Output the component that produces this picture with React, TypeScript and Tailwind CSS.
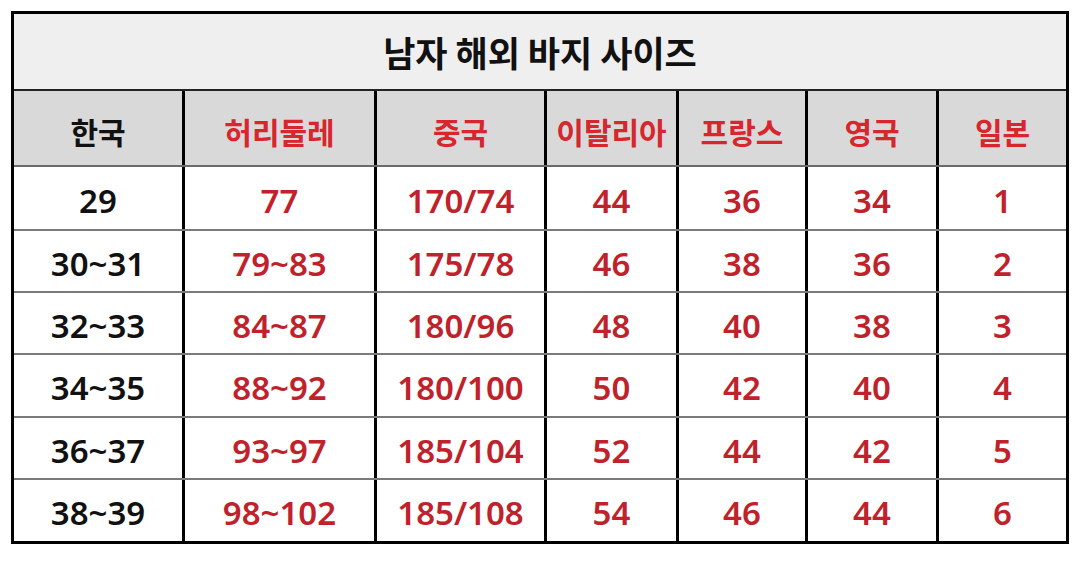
const widths = ["w-[168px]", "w-[192px]", "w-[170px]", "w-[132px]", "w-[129px]", "w-[131px]", "w-[130px]"];

const headers = ["한국", "허리둘레", "중국", "이탈리아", "프랑스", "영국", "일본"];

const rowHeights = ["h-[64px]", "h-[62px]", "h-[62px]", "h-[63px]", "h-[62px]", "h-[61px]"];

const rows = [
	["29", "77", "170/74", "44", "36", "34", "1"],
	["30~31", "79~83", "175/78", "46", "38", "36", "2"],
	["32~33", "84~87", "180/96", "48", "40", "38", "3"],
	["34~35", "88~92", "180/100", "50", "42", "40", "4"],
	["36~37", "93~97", "185/104", "52", "44", "42", "5"],
	["38~39", "98~102", "185/108", "54", "46", "44", "6"],
];

const font = { fontFamily: '"Noto Sans CJK KR", "Noto Sans", sans-serif' };

export default function App() {
	return (
		<div className="w-[1080px] h-[561px] bg-white pt-[11px] pl-[11px]" style={font}>
			<div className="w-[1058px] border-[3px] border-black flex flex-col">
				<div className="h-[77px] bg-[#efefef] border-b-2 border-[#222] flex items-center justify-center">
					<span className="text-[35px] font-bold text-[#111] leading-none">남자 해외 바지 사이즈</span>
				</div>
				<div className="flex h-[76px] bg-[#d9d9d9] border-b-2 border-[#6b6b6b]">
					{headers.map((h, i) => (
						<div
							key={h}
							className={`${widths[i]} flex items-center justify-center pt-[6px] ${i > 0 ? "border-l-[3px] border-black" : ""}`}
						>
							<span className={`text-[30px] font-bold leading-none ${i === 0 ? "text-[#111]" : "text-[#d8262e]"}`}>
								{h}
							</span>
						</div>
					))}
				</div>
				{rows.map((r, ri) => (
					<div
						key={ri}
						className={`flex ${rowHeights[ri]} ${ri < rows.length - 1 ? "border-b-2 border-[#7a7a7a]" : ""}`}
					>
						{r.map((c, i) => (
							<div
								key={i}
								className={`${widths[i]} flex items-center justify-center pt-[4px] ${i > 0 ? "border-l-[3px] border-black" : ""}`}
							>
								<span
									className={`text-[33px] font-semibold leading-none ${i === 0 ? "text-[#111]" : "text-[#c0222b]"}`}
									style={{ fontFamily: '"Noto Sans", "Noto Sans CJK KR", sans-serif' }}
								>
									{c}
								</span>
							</div>
						))}
					</div>
				))}
			</div>
		</div>
	);
}
